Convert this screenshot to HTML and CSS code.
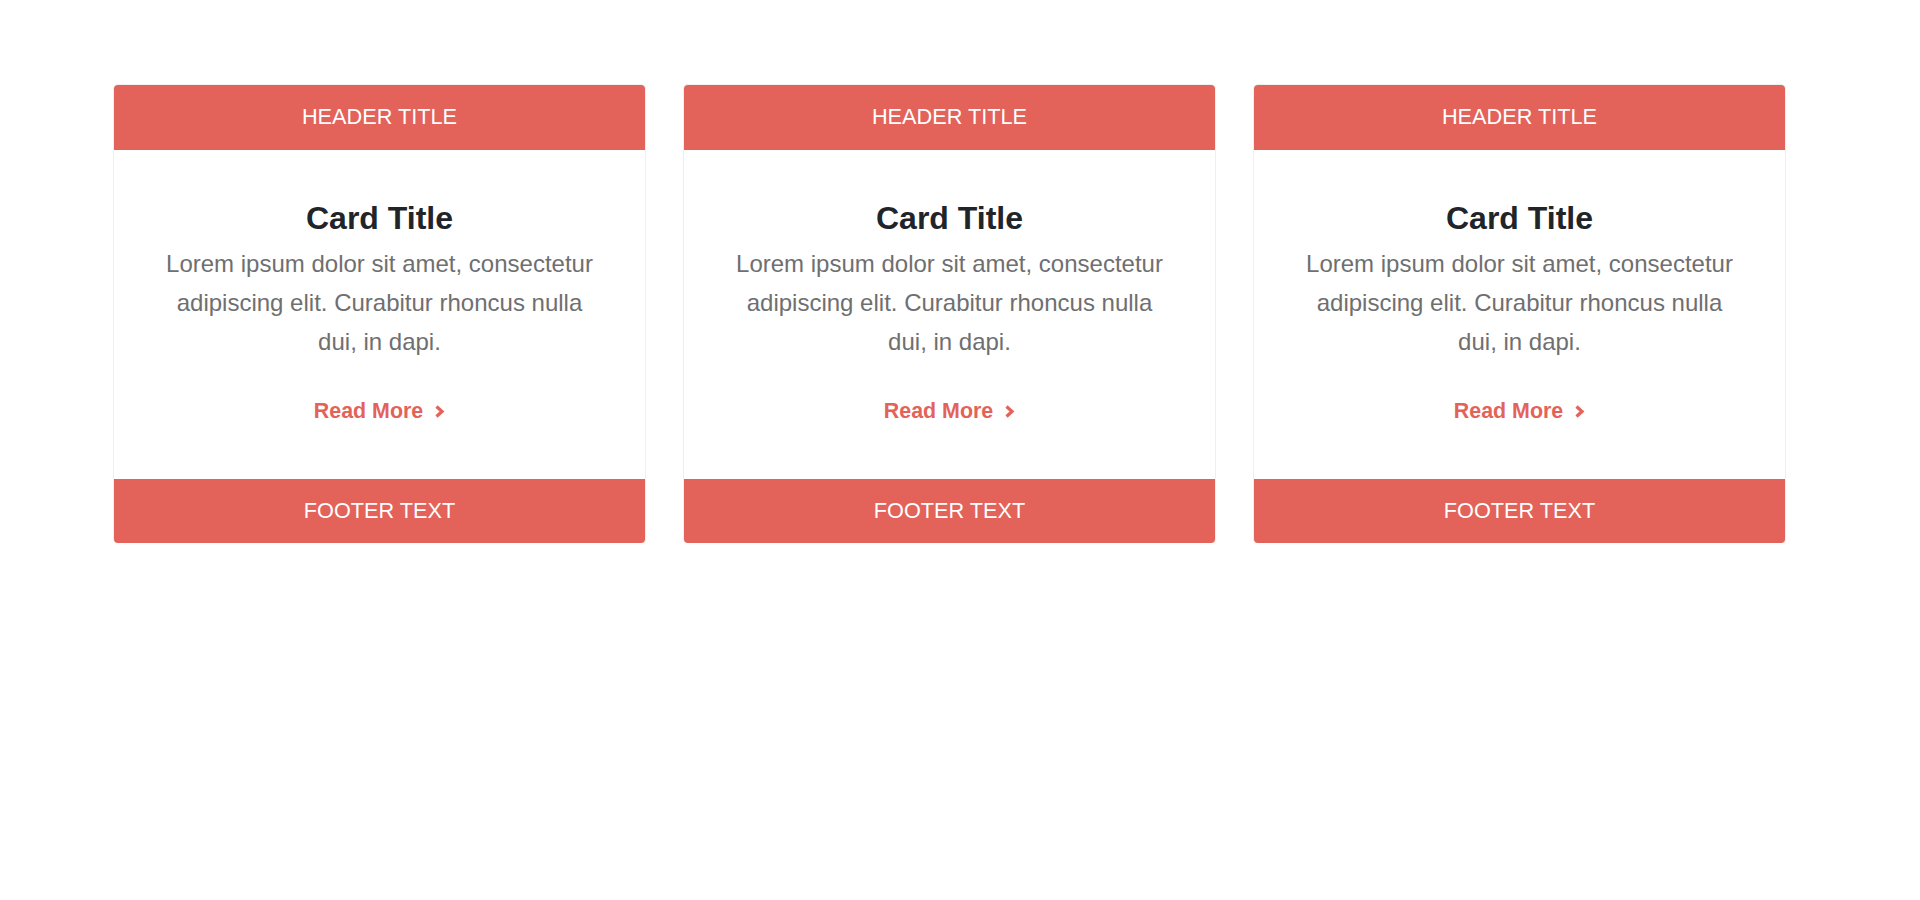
FILE: index.html
```html
<!DOCTYPE html>
<html lang="en">
<head>
<meta charset="utf-8">
<title>Cards</title>
<link rel="stylesheet" href="styles.css">
</head>
<body>
<main class="cards">
  <article class="card">
    <header class="card-header">HEADER TITLE</header>
    <div class="card-body">
      <h2 class="card-title">Card Title</h2>
      <p class="card-text">Lorem ipsum dolor sit amet, consectetur adipiscing elit. Curabitur rhoncus nulla dui, in dapi.</p>
      <a class="read-more" href="#">Read More <svg class="chev" width="11" height="13" viewBox="0 0 11 13"><polyline points="2.5,1.5 8,6.5 2.5,11.5" fill="none" stroke="currentColor" stroke-width="3.2"/></svg></a>
    </div>
    <footer class="card-footer">FOOTER TEXT</footer>
  </article>
  <article class="card">
    <header class="card-header">HEADER TITLE</header>
    <div class="card-body">
      <h2 class="card-title">Card Title</h2>
      <p class="card-text">Lorem ipsum dolor sit amet, consectetur adipiscing elit. Curabitur rhoncus nulla dui, in dapi.</p>
      <a class="read-more" href="#">Read More <svg class="chev" width="11" height="13" viewBox="0 0 11 13"><polyline points="2.5,1.5 8,6.5 2.5,11.5" fill="none" stroke="currentColor" stroke-width="3.2"/></svg></a>
    </div>
    <footer class="card-footer">FOOTER TEXT</footer>
  </article>
  <article class="card">
    <header class="card-header">HEADER TITLE</header>
    <div class="card-body">
      <h2 class="card-title">Card Title</h2>
      <p class="card-text">Lorem ipsum dolor sit amet, consectetur adipiscing elit. Curabitur rhoncus nulla dui, in dapi.</p>
      <a class="read-more" href="#">Read More <svg class="chev" width="11" height="13" viewBox="0 0 11 13"><polyline points="2.5,1.5 8,6.5 2.5,11.5" fill="none" stroke="currentColor" stroke-width="3.2"/></svg></a>
    </div>
    <footer class="card-footer">FOOTER TEXT</footer>
  </article>
</main>
</body>
</html>
```
FILE: styles.css
```css
html, body {
  margin: 0;
  padding: 0;
  background: #ffffff;
}
body {
  font-family: "Liberation Sans", Arial, sans-serif;
}
.cards {
  display: flex;
  align-items: flex-start;
  gap: 39px;
  padding: 85px 0 0 114px;
}
.card {
  width: 531px;
  display: flex;
  flex-direction: column;
  border-radius: 4px;
  overflow: hidden;
  box-shadow: 0 0 0 1px #efefef;
  background: #fff;
}
.card-header,
.card-footer {
  background: #e3625a;
  color: #ffffff;
  text-align: center;
  font-size: 21.7px;
  line-height: 25px;
}
.card-header {
  padding: 19px 0 21px;
}
.card-footer {
  padding: 19px 0 20px;
}
.card-body {
  padding: 50px 50px 56px;
  text-align: center;
  display: flex;
  flex-direction: column;
  align-items: center;
}
.card-title {
  margin: 0;
  font-size: 32px;
  line-height: 37px;
  font-weight: 700;
  color: #212529;
}
.card-text {
  margin: 7px 0 0;
  font-size: 24px;
  line-height: 39px;
  color: #6f6f6f;
}
.read-more {
  margin-top: 38px;
  display: inline-flex;
  align-items: center;
  gap: 11px;
  font-size: 21.4px;
  line-height: 24px;
  font-weight: 700;
  color: #e3625a;
  text-decoration: none;
}
.chev {
  display: block;
  margin-top: 1px;
}
```
